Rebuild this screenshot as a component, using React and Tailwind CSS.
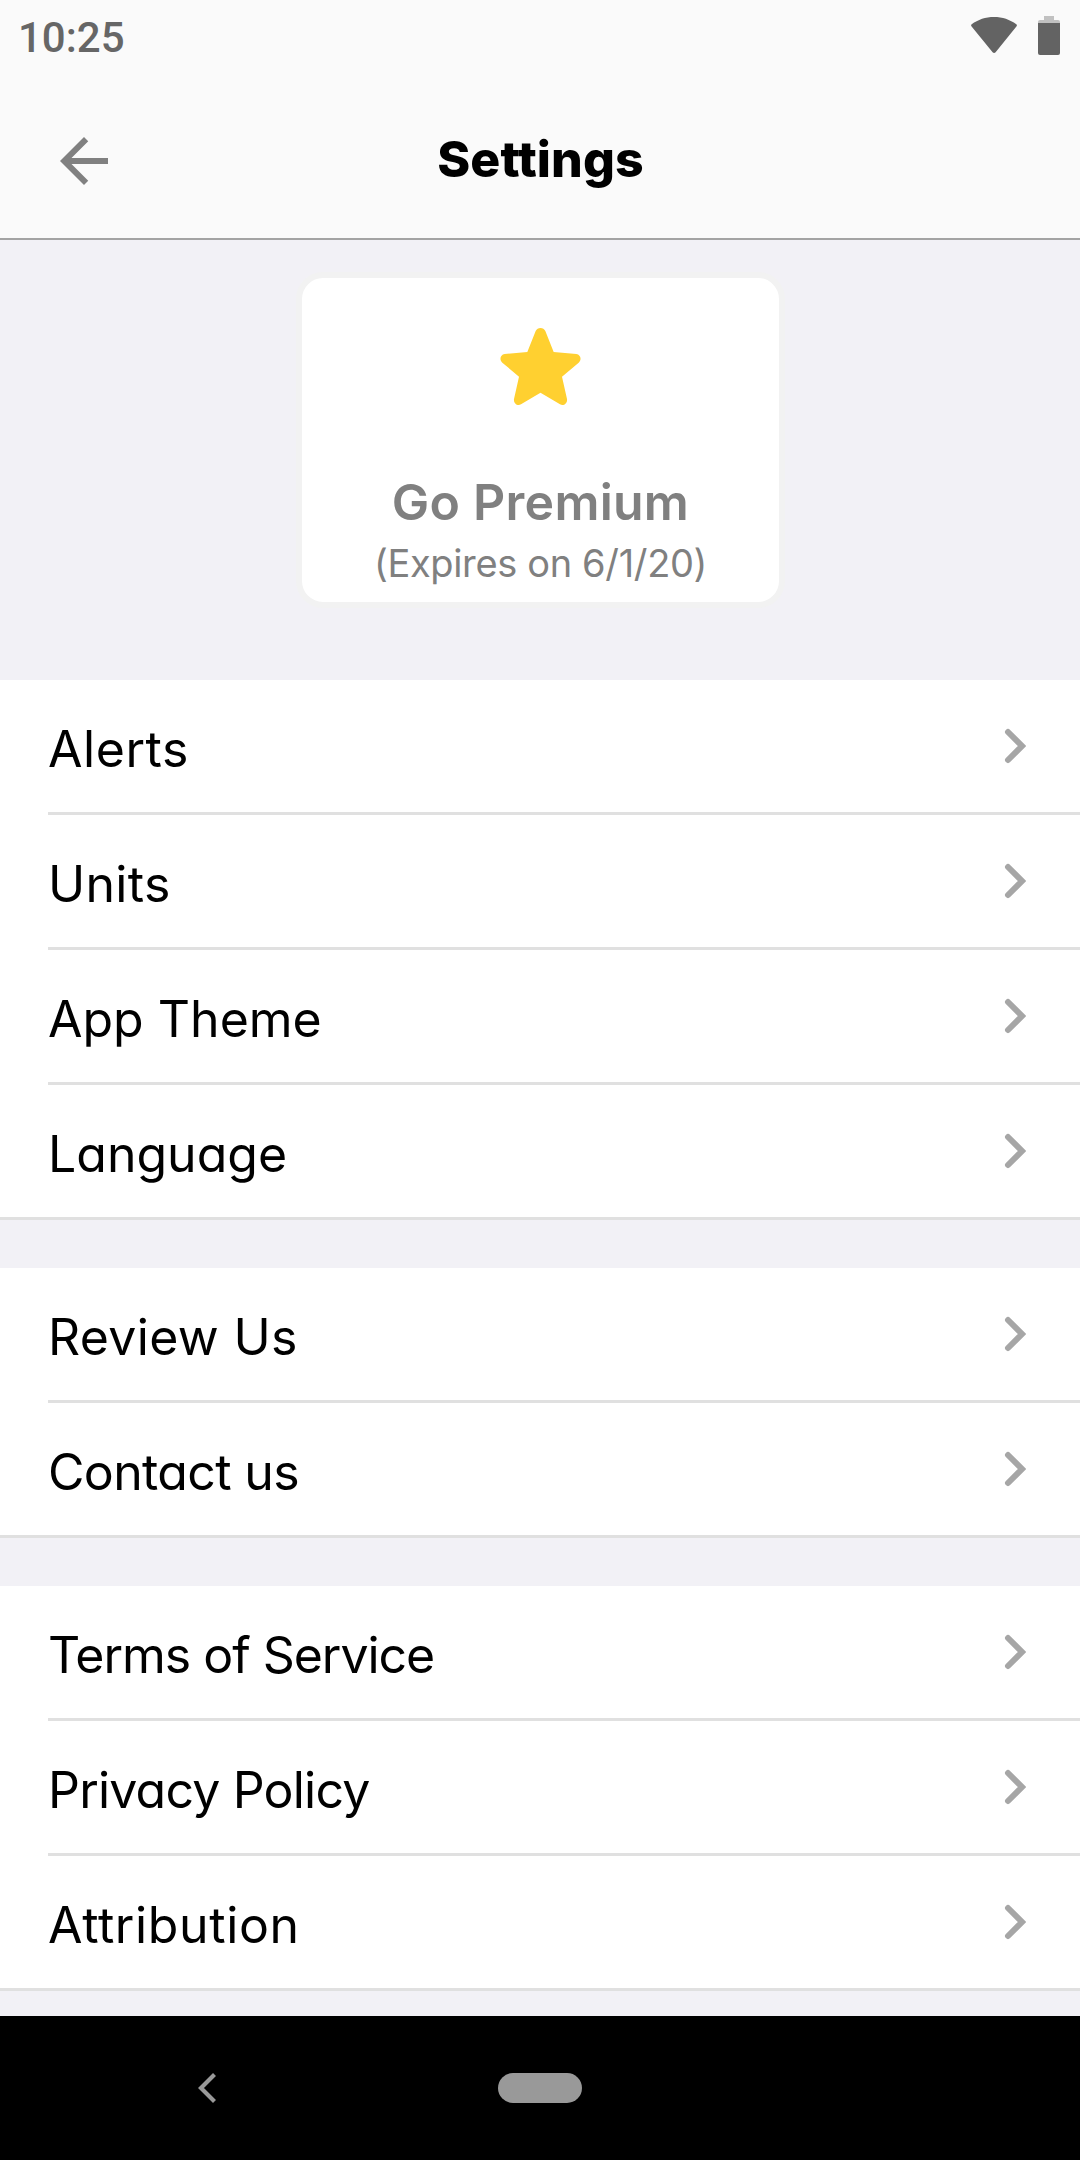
const sections = [
  [
    { label: 'Alerts', tracking: 'tracking-[0.56px]' },
    { label: 'Units', tracking: 'tracking-[0.3px]' },
    { label: 'App Theme', tracking: 'tracking-[0px]' },
    { label: 'Language', tracking: 'tracking-[0px]' },
  ],
  [
    { label: 'Review Us', tracking: 'tracking-[0.35px]' },
    { label: 'Contact us', tracking: 'tracking-[-0.65px]' },
  ],
  [
    { label: 'Terms of Service', tracking: 'tracking-[-1.03px]' },
    { label: 'Privacy Policy', tracking: 'tracking-[-0.8px]' },
    { label: 'Attribution', tracking: 'tracking-[0.62px]' },
  ],
];

function StatusBar() {
  return (
    <div className="flex h-[84px] items-start justify-between pl-[18px] pr-5">
      <span className="mt-[14px] font-['Roboto'] text-[42px] leading-[48px] font-medium text-[#666]">10:25</span>
      <div className="flex items-start gap-[21px] pt-4">
        <svg width="46" height="37" viewBox="0 0 46 37" className="mt-px text-[#636363]">
          <path
            d="M.7 7.2C7 2.6 14.6 0 23 0s16 2.6 22.3 7.2c.7.5.8 1.3.3 2L24.6 35.2c-.8 1-2.2 1-3 0L.4 9.2c-.5-.7-.4-1.5.3-2z"
            fill="currentColor"
          />
        </svg>
        <svg width="22" height="39" viewBox="0 0 22 39">
          <path d="M6 0h10v4h4a2 2 0 0 1 2 2v1H0V6a2 2 0 0 1 2-2h4z" fill="#c1c1c1" />
          <path d="M0 7h22v30a2 2 0 0 1-2 2H2a2 2 0 0 1-2-2z" fill="#636363" />
        </svg>
      </div>
    </div>
  );
}

function Header() {
  return (
    <header className="h-[240px] border-b-2 border-[#a3a3a3] bg-[#fafafa]">
      <StatusBar />
      <div className="grid h-[154px] grid-cols-[72px_1fr_72px] items-center px-12">
        <button aria-label="Back">
          <svg width="72" height="72" viewBox="0 0 24 24" fill="#808080">
            <path d="M20 11H7.83l5.59-5.59L12 4l-8 8 8 8 1.41-1.41L7.83 13H20v-2z" />
          </svg>
        </button>
        <h1 className="mb-1 pl-px text-center text-[50px] leading-[60px] font-extrabold tracking-[0.1px]">Settings</h1>
      </div>
    </header>
  );
}

function PremiumCard() {
  return (
    <div className="mx-auto mt-8 mb-[72px] flex h-[336px] w-[489px] flex-col items-center rounded-[27px] border-[6px] border-[#f2f2f2] bg-white pt-[50px] pl-px text-[#808080]">
      <svg width="81" height="77" viewBox="0 0 241 231" fill="#ffd030">
        <path d="M106 9C109 3 114 0 120.500 0C127 0 132 3 135 9L160 72L228 78C241 80 245 95 235 104L185 146L200 213C202 226 190 235 179 229L120.500 194L62 229C51 235 39 226 41 213L56 146L6 104C-4 95 0 80 13 78L81 72Z" />
      </svg>
      <p className="mt-[67px] text-[50px] leading-[60px] font-semibold tracking-[0.25px]">Go Premium</p>
      <p className="mt-[7px] text-[38px] leading-[48px] tracking-[-0.35px]">(Expires on 6/1/20)</p>
    </div>
  );
}

function Row({ label, tracking, last }) {
  return (
    <div className={last ? 'border-b-[3px] border-[#e0e0e0] pl-12' : 'pl-12'}>
      <div
        className={
          last
            ? 'flex h-[132px] items-center justify-between pr-[54px]'
            : 'flex h-[135px] items-center justify-between border-b-[3px] border-[#e0e0e0] pr-[54px]'
        }
      >
        <span className={`mt-[6px] text-[50px] leading-[60px] text-black ${tracking}`}>{label}</span>
        <svg width="22" height="36" viewBox="0 0 22 36" fill="none" stroke="#a6a6a6" strokeWidth="6" strokeLinecap="round">
          <path d="M4 4l14 14L4 32" />
        </svg>
      </div>
    </div>
  );
}

function NavBar() {
  return (
    <nav className="grid h-[144px] grid-cols-3 items-center bg-black">
      <svg width="20" height="32" viewBox="0 0 20 32" fill="none" stroke="#999" strokeWidth="4.200" className="ml-[197px]">
        <path d="M17.500 2.500L4 16l13.500 13.500" />
      </svg>
      <span className="h-[30px] w-[84px] justify-self-center rounded-full bg-[#999]" />
    </nav>
  );
}

export default function App() {
  return (
    <div className="flex h-[2160px] w-[1080px] flex-col bg-[#f2f1f6] font-['Inter',sans-serif] text-black [font-feature-settings:'cv11']">
      <Header />
      <main className="flex-1">
        <PremiumCard />
        <div className="flex flex-col gap-12">
          {sections.map((rows, i) => (
            <section key={i} className="bg-white">
              {rows.map((row, j) => (
                <Row key={row.label} {...row} last={j === rows.length - 1} />
              ))}
            </section>
          ))}
        </div>
      </main>
      <NavBar />
    </div>
  );
}
